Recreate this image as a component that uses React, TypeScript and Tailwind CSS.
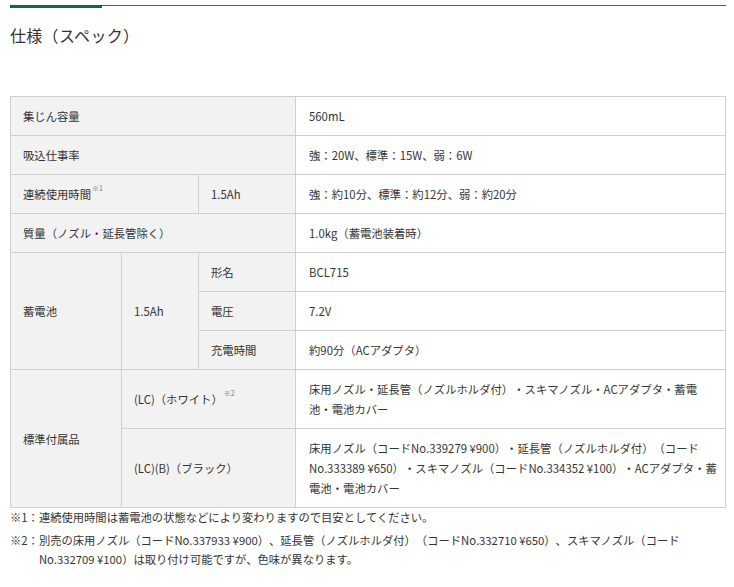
const FONT = '"Noto Sans CJK JP", "Noto Sans", sans-serif'

const th = 'border border-[#cfcfcf] bg-[#f2f2f2] px-[12px] py-[9px] text-left align-middle font-normal'
const td = 'border border-[#cfcfcf] bg-white pl-[13px] pr-[6px] py-[9px] text-left align-middle'

function Note({ mark }: { mark: string }) {
  return <sup className="ml-[1px] text-[7px] text-[#777] align-[5px]">{mark}</sup>
}

export default function App() {
  return (
    <div
      className="min-h-[587px] bg-white text-[#333] [text-spacing-trim:space-all]"
      style={{ fontFamily: FONT }}
    >
      <div className="pl-[10px] pr-[8px] pt-[5px]">
        <div className="flex items-start">
          <div className="h-[3px] w-[92px] bg-[#0b6b3c]" />
          <div className="h-[1px] flex-1 bg-[#2c6e58]" />
        </div>
      </div>

      <h2 className="pl-[10px] pt-[15px] text-[16px] leading-[24px] font-normal tracking-[0.3px]">
        仕様（スペック）
      </h2>

      <div className="pl-[10px] pr-[9px] pt-[49px]">
        <table className="w-[715px] table-fixed border-collapse text-[11.35px] leading-[20px]">
          <colgroup>
            <col className="w-[111px]" />
            <col className="w-[77px]" />
            <col className="w-[97px]" />
            <col className="w-[430px]" />
          </colgroup>
          <tbody>
            <tr>
              <th colSpan={3} className={th}>集じん容量</th>
              <td className={td}>560mL</td>
            </tr>
            <tr>
              <th colSpan={3} className={th}>吸込仕事率</th>
              <td className={td}>強：20W、標準：15W、弱：6W</td>
            </tr>
            <tr>
              <th colSpan={2} className={th}>
                連続使用時間<Note mark="※1" />
              </th>
              <th className={th}>1.5Ah</th>
              <td className={td}>強：約10分、標準：約12分、弱：約20分</td>
            </tr>
            <tr>
              <th colSpan={3} className={th}>質量（ノズル・延長管除く）</th>
              <td className={td}>1.0kg（蓄電池装着時）</td>
            </tr>
            <tr>
              <th rowSpan={3} className={th}>蓄電池</th>
              <th rowSpan={3} className={th}>1.5Ah</th>
              <th className={th}>形名</th>
              <td className={td}>BCL715</td>
            </tr>
            <tr>
              <th className={th}>電圧</th>
              <td className={td}>7.2V</td>
            </tr>
            <tr>
              <th className={th}>充電時間</th>
              <td className={td}>約90分（ACアダプタ）</td>
            </tr>
            <tr>
              <th rowSpan={2} className={th}>標準付属品</th>
              <th colSpan={2} className={th}>
                (LC)（ホワイト）<Note mark="※2" />
              </th>
              <td className={td}>
                床用ノズル・延長管（ノズルホルダ付）・スキマノズル・ACアダプタ・蓄電
                <br />
                池・電池カバー
              </td>
            </tr>
            <tr>
              <th colSpan={2} className={th}>(LC)(B)（ブラック）</th>
              <td className={td}>
                床用ノズル（コードNo.339279 ¥900）・延長管（ノズルホルダ付）（コードNo.333389 ¥650）・スキマノズル（コードNo.334352 ¥100）・ACアダプタ・蓄電池・電池カバー
              </td>
            </tr>
          </tbody>
        </table>

        <div className="flex flex-col gap-[4px] pr-[40px] text-[11.3px] leading-[19px]">
          <div className="flex">
            <span className="shrink-0">※1：</span>
            <span>連続使用時間は蓄電池の状態などにより変わりますので目安としてください。</span>
          </div>
          <div className="flex">
            <span className="shrink-0">※2：</span>
            <span>
              別売の床用ノズル（コードNo.337933 ¥900）、延長管（ノズルホルダ付）（コードNo.332710 ¥650）、スキマノズル（コードNo.332709 ¥100）は取り付け可能ですが、色味が異なります。
            </span>
          </div>
        </div>
      </div>
    </div>
  )
}
